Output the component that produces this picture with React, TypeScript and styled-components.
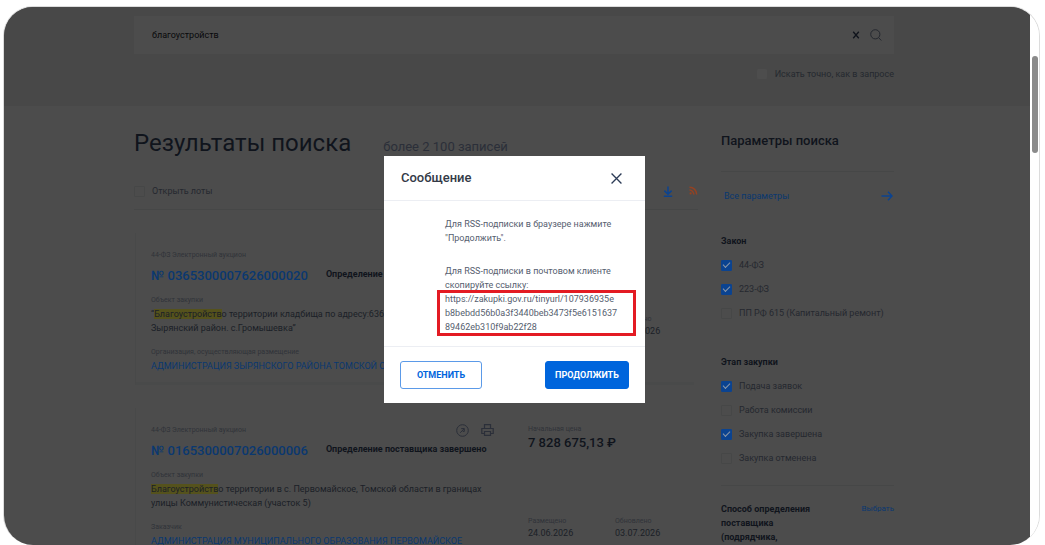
import React from "react";
import styled, { createGlobalStyle, css } from "styled-components";

const c = {
  page: "#4c4c4c",
  header: "#484848",
  line: "#464747",
  ink: "#10141c",
  text: "#1b1f27",
  soft: "#25282f",
  muted: "#303339",
  count: "#2b2f39",
  link: "#0a3870",
  blue: "#0b4390",
};

const GlobalStyle = createGlobalStyle`
  *, *::before, *::after { box-sizing: border-box; }
  body {
    margin: 0;
    background: #fff;
    font-family: Roboto, "Liberation Sans", sans-serif;
    font-size: 9px;
    line-height: 14px;
    color: ${c.text};
  }
  h1, h2, h3, p, fieldset, legend, dl, dt, dd { margin: 0; padding: 0; border: 0; }
  button, input { font: inherit; color: inherit; }
  a { color: ${c.link}; text-decoration: none; }
`;

const Frame = styled.div`
  display: flex;
  height: calc(100vh - 6px);
  margin: 6px 5px 0 3px;
  overflow: hidden;
  border: 1px solid #dcdcdc;
  border-bottom: 0;
  border-radius: 30px;
`;

const Page = styled.div`
  position: relative;
  flex: 1;
  overflow: hidden;
  background: ${c.page};
`;

const ScrollTrack = styled.div`
  width: 9px;
  padding: 49px 1px 0 2px;
  background: #fff;
`;

const ScrollThumb = styled.div`
  height: 97px;
  border-radius: 3px;
  background: #8a8a8a;
`;

const Header = styled.header`
  display: flex;
  flex-direction: column;
  align-items: flex-end;
  gap: 13px;
  height: 99px;
  padding: 9px 136px 0 130px;
  background: ${c.header};
`;

const SearchBar = styled.form`
  display: flex;
  align-items: center;
  gap: 10px;
  width: 100%;
  height: 38px;
  padding: 0 12px 0 18px;
  background: ${c.page};
`;

const SearchInput = styled.input`
  flex: 1;
  min-width: 0;
  padding: 0;
  border: 0;
  outline: 0;
  background: none;
  color: #08090b;
`;

const IconButton = styled.button<{ $color?: string }>`
  display: inline-flex;
  flex: none;
  padding: 0;
  border: 0;
  background: none;
  color: ${(p) => p.$color ?? c.soft};
  cursor: pointer;
`;

const CheckLabel = styled.label<{ $gap?: number }>`
  display: flex;
  align-items: center;
  gap: ${(p) => p.$gap ?? 8}px;
  color: ${c.soft};
`;

const CheckInput = styled.input.attrs({ type: "checkbox" })<{ $light?: boolean }>`
  appearance: none;
  position: relative;
  flex: none;
  width: 10px;
  height: 10px;
  margin: 0;
  border: 1px solid ${(p) => (p.$light ? "#4d4d4d" : "#464747")};
  border-radius: 1px;
  background: ${(p) => (p.$light ? "#4d4d4d" : "transparent")};

  ${(p) =>
    !p.$light &&
    css`
      width: 11px;
      height: 11px;
    `}

  &:checked {
    border-color: ${c.blue};
    background: ${c.blue};
  }

  &:checked::after {
    content: "";
    position: absolute;
    left: 1px;
    top: 1px;
    width: 7px;
    height: 4px;
    border: solid #8a97a8;
    border-width: 0 0 1px 1px;
    transform: rotate(-45deg);
  }
`;

const Columns = styled.div`
  display: grid;
  grid-template-columns: minmax(0, 1fr) 173px;
  gap: 23px;
  padding: 0 136px 0 130px;
`;

const Results = styled.main`
  padding-top: 21px;
`;

const TitleRow = styled.div`
  display: flex;
  align-items: flex-end;
  gap: 32px;
`;

const Title = styled.h1`
  font-size: 24px;
  font-weight: 400;
  line-height: 32px;
  color: ${c.ink};
`;

const Count = styled.span`
  font-size: 13px;
  line-height: 24px;
  color: ${c.count};
`;

const Toolbar = styled.div`
  display: flex;
  align-items: center;
  justify-content: space-between;
  height: 37px;
  margin-top: 14px;
  border-bottom: 1px solid ${c.line};
`;

const ToolIcons = styled.div`
  display: flex;
  gap: 16px;
`;

const Card = styled.article`
  display: grid;
  grid-template-columns: minmax(0, 1fr) 166px;
  gap: 34px;
  min-height: 152px;
  margin: 23px 4px 0 1px;
  padding: 14px 0 0 15px;
  border-left: 1px solid #484949;
  border-bottom: 3px solid #494a4a;
`;

const CardMain = styled.div``;

const CardTop = styled.div`
  display: flex;
  align-items: center;
  justify-content: space-between;
  height: 16px;
`;

const CardIcons = styled.span`
  display: flex;
  gap: 12px;
  color: ${c.count};
`;

const Caption = styled.div`
  font-size: 7px;
  line-height: 14px;
  color: ${c.muted};
`;

const NumberRow = styled.div`
  display: flex;
  align-items: center;
  gap: 18px;
  height: 26px;
  margin-bottom: 4px;
`;

const NumberLink = styled.a`
  font-size: 13px;
  font-weight: 500;
  white-space: nowrap;
`;

const Status = styled.span`
  padding-bottom: 4px;
  font-weight: 700;
  white-space: nowrap;
  color: ${c.ink};
`;

const Subject = styled.p`
  margin-bottom: 10px;
  white-space: nowrap;
`;

const Mark = styled.mark`
  background: #55521c;
  color: inherit;
`;

const OrgLink = styled.a`
  display: block;
  white-space: nowrap;
`;

const CardSide = styled.div<{ $drop: number }>`
  display: flex;
  flex-direction: column;
  gap: ${(p) => p.$drop}px;
`;

const PriceBlock = styled.div`
  height: 32px;
`;

const Price = styled.div`
  font-size: 13px;
  font-weight: 500;
  color: ${c.ink};
`;

const Dates = styled.dl`
  display: grid;
  grid-template-columns: 87px 1fr;
  line-height: 12px;

  dt {
    font-size: 7px;
    color: ${c.muted};
  }
`;

const Sidebar = styled.aside`
  padding-top: 26px;
`;

const SideTitle = styled.h2`
  height: 40px;
  font-size: 13px;
  font-weight: 500;
  line-height: 18px;
  color: ${c.ink};
  border-bottom: 1px solid ${c.line};
`;

const AllParams = styled.a`
  display: flex;
  align-items: center;
  justify-content: space-between;
  height: 47px;
  padding: 0 1px 0 3px;
`;

const Group = styled.fieldset`
  display: flex;
  flex-direction: column;
  gap: 10px;
  padding: 15px 0 20px;
`;

const GroupTitle = styled.legend`
  float: left;
  font-weight: 700;
  color: ${c.ink};
`;

const MethodRow = styled.section`
  display: flex;
  justify-content: space-between;
  padding-top: 16px;
  border-top: 1px solid ${c.line};

  h3 {
    width: 100px;
    font-size: 9px;
    font-weight: 700;
    color: ${c.ink};
  }

  a {
    font-size: 8px;
  }
`;

const Overlay = styled.div`
  position: absolute;
  inset: 0;
  display: flex;
  align-items: flex-start;
  justify-content: center;
  padding: 149px 5px 0 0;
`;

const Dialog = styled.section`
  width: 261px;
  background: #fff;
  color: #56606f;
`;

const DialogHeader = styled.header`
  display: flex;
  align-items: center;
  justify-content: space-between;
  height: 45px;
  padding: 0 23px 0 17px;
  border-bottom: 1px solid #eceef3;

  h2 {
    font-size: 13px;
    font-weight: 500;
    color: #333a47;
  }
`;

const DialogBody = styled.div`
  display: flex;
  flex-direction: column;
  gap: 19px;
  height: 145px;
  padding: 16px 16px 0 61px;
`;

const Feed = styled.a`
  position: relative;
  display: block;
  color: inherit;

  &::after {
    content: "";
    position: absolute;
    inset: -2px -7px -2px -8px;
    border: 3px solid #e31b23;
  }
`;

const DialogFooter = styled.footer`
  display: flex;
  align-items: center;
  justify-content: space-between;
  height: 57px;
  padding: 0 16px;
  border-top: 1px solid #eceef3;
`;

const Action = styled.button<{ $primary?: boolean }>`
  width: ${(p) => (p.$primary ? 84 : 82)}px;
  height: 28px;
  padding: 0;
  border: 1px solid ${(p) => (p.$primary ? "#0065dc" : "#5b9ae8")};
  border-radius: 3px;
  background: ${(p) => (p.$primary ? "#0065dc" : "#fff")};
  color: ${(p) => (p.$primary ? "#fff" : "#0065dc")};
  font-weight: 700;
  cursor: pointer;
`;

const CrossIcon = ({ size, width }: { size: number; width: number }) => (
  <svg width={size} height={size} viewBox="0 0 10 10" fill="none" stroke="currentColor" strokeWidth={width}>
    <path d="M0.5 0.5 9.5 9.5M9.5 0.5 0.5 9.5" />
  </svg>
);

const ClearIcon = () => (
  <svg width="8" height="8" viewBox="0 0 8 8" fill="none" stroke="currentColor" strokeWidth="1.3">
    <path d="M1.2 0.8 6.8 7.2M6.8 0.8 1.2 7.2" />
  </svg>
);

const SearchIcon = () => (
  <svg width="12" height="12" viewBox="0 0 12 12" fill="none" stroke="currentColor">
    <circle cx="5.3" cy="5.3" r="4.6" />
    <path d="M8.7 8.7 11.3 11.5" />
  </svg>
);

const DownloadIcon = () => (
  <svg width="10" height="11" viewBox="0 0 10 11" fill="none" stroke="currentColor" strokeWidth="1.5">
    <path d="M5 0.5V8M1.4 4.6 5 8.2 8.6 4.6M0.8 10.2H9.2" />
  </svg>
);

const RssIcon = () => (
  <svg width="9" height="9" viewBox="0 0 9 9" fill="none" stroke="currentColor" strokeWidth="1.5">
    <path d="M0.5 1.2A7.2 7.2 0 0 1 7.7 8.6M0.5 4.1A4.3 4.3 0 0 1 4.8 8.6" />
    <circle cx="1.6" cy="7.4" r="1.1" fill="currentColor" stroke="none" />
  </svg>
);

const ArrowIcon = () => (
  <svg width="12" height="10" viewBox="0 0 12 10" fill="none" stroke={c.blue} strokeWidth="1.5">
    <path d="M0.5 5H11M7 0.8 11 5 7 9.2" />
  </svg>
);

const KeyIcon = () => (
  <svg width="13" height="13" viewBox="0 0 13 13" fill="none" stroke="currentColor">
    <circle cx="6.5" cy="6.5" r="5.8" />
    <path d="M5.2 4.6H8.3V7.4H6.8M8 4.9 4.2 8.8" />
  </svg>
);

const PrintIcon = () => (
  <svg width="13" height="12" viewBox="0 0 13 12" fill="none" stroke="currentColor" strokeWidth="1.2">
    <path d="M3.5 4.5V0.6H9.5V4.5M3.5 9.5H0.8V4.5H12.2V9.5H9.5M3.5 7.5H9.5V11.4H3.5Z" />
  </svg>
);

type Purchase = {
  number: string;
  quote?: string;
  mark: string;
  subject: React.ReactNode;
  role: string;
  org: string;
  price?: string;
  placed?: string;
  updated: string;
  drop: number;
};

const purchases: Purchase[] = [
  {
    number: "0365300007626000020",
    quote: "“",
    mark: "Благоустройств",
    subject: (
      <>
        о территории кладбища по адресу:6368
        <br />
        Зырянский район. с.Громышевка”
      </>
    ),
    role: "Организация, осуществляющая размещение",
    org: "АДМИНИСТРАЦИЯ ЗЫРЯНСКОГО РАЙОНА ТОМСКОЙ ОБЛ",
    updated: "03.07.2026",
    drop: 34,
  },
  {
    number: "0165300007026000006",
    mark: "Благоустройств",
    subject: (
      <>
        о территории в с. Первомайское, Томской области в границах
        <br />
        улицы Коммунистическая (участок 5)
      </>
    ),
    role: "Заказчик",
    org: "АДМИНИСТРАЦИЯ МУНИЦИПАЛЬНОГО ОБРАЗОВАНИЯ ПЕРВОМАЙСКОЕ",
    price: "7 828 675,13 ₽",
    placed: "24.06.2026",
    updated: "03.07.2026",
    drop: 61,
  },
];

const filters = [
  {
    title: "Закон",
    items: [
      ["44-ФЗ", true],
      ["223-ФЗ", true],
      ["ПП РФ 615 (Капитальный ремонт)", false],
    ],
  },
  {
    title: "Этап закупки",
    items: [
      ["Подача заявок", true],
      ["Работа комиссии", false],
      ["Закупка завершена", true],
      ["Закупка отменена", false],
    ],
  },
] as { title: string; items: [string, boolean][] }[];

const PurchaseCard = ({ item }: { item: Purchase }) => (
  <Card>
    <CardMain>
      <CardTop>
        <Caption>44-ФЗ Электронный аукцион</Caption>
        <CardIcons>
          <KeyIcon />
          <PrintIcon />
        </CardIcons>
      </CardTop>
      <NumberRow>
        <NumberLink href="#">№ {item.number}</NumberLink>
        <Status>Определение поставщика завершено</Status>
      </NumberRow>
      <Caption>Объект закупки</Caption>
      <Subject>
        {item.quote}
        <Mark>{item.mark}</Mark>
        {item.subject}
      </Subject>
      <Caption>{item.role}</Caption>
      <OrgLink href="#">{item.org}</OrgLink>
    </CardMain>
    <CardSide $drop={item.drop}>
      <PriceBlock>
        {item.price && (
          <>
            <Caption>Начальная цена</Caption>
            <Price>{item.price}</Price>
          </>
        )}
      </PriceBlock>
      <Dates>
        <dt>{item.placed && "Размещено"}</dt>
        <dt>Обновлено</dt>
        <dd>{item.placed}</dd>
        <dd>{item.updated}</dd>
      </Dates>
    </CardSide>
  </Card>
);

export default function App() {
  return (
    <>
      <GlobalStyle />
      <Frame>
        <Page>
          <Header>
            <SearchBar onSubmit={(e) => e.preventDefault()}>
              <SearchInput aria-label="Поиск" defaultValue="благоустройств" />
              <IconButton type="button" aria-label="Очистить" $color={c.ink}>
                <ClearIcon />
              </IconButton>
              <IconButton aria-label="Найти">
                <SearchIcon />
              </IconButton>
            </SearchBar>
            <CheckLabel>
              <CheckInput $light />
              Искать точно, как в запросе
            </CheckLabel>
          </Header>
          <Columns>
            <Results>
              <TitleRow>
                <Title>Результаты поиска</Title>
                <Count>более 2 100 записей</Count>
              </TitleRow>
              <Toolbar>
                <CheckLabel $gap={7}>
                  <CheckInput />
                  Открыть лоты
                </CheckLabel>
                <ToolIcons>
                  <IconButton type="button" aria-label="Скачать" $color={c.blue}>
                    <DownloadIcon />
                  </IconButton>
                  <IconButton type="button" aria-label="RSS" $color="#944222">
                    <RssIcon />
                  </IconButton>
                </ToolIcons>
              </Toolbar>
              {purchases.map((p) => (
                <PurchaseCard key={p.number} item={p} />
              ))}
            </Results>
            <Sidebar>
              <SideTitle>Параметры поиска</SideTitle>
              <AllParams href="#">
                Все параметры
                <ArrowIcon />
              </AllParams>
              {filters.map((g) => (
                <Group key={g.title}>
                  <GroupTitle>{g.title}</GroupTitle>
                  {g.items.map(([name, on]) => (
                    <CheckLabel key={name} $gap={7}>
                      <CheckInput defaultChecked={on} />
                      {name}
                    </CheckLabel>
                  ))}
                </Group>
              ))}
              <MethodRow>
                <h3>Способ определения поставщика (подрядчика,</h3>
                <a href="#">Выбрать</a>
              </MethodRow>
            </Sidebar>
          </Columns>
          <Overlay>
            <Dialog role="dialog" aria-modal="true" aria-labelledby="dialog-title">
              <DialogHeader>
                <h2 id="dialog-title">Сообщение</h2>
                <IconButton type="button" aria-label="Закрыть" $color="#2b3a55">
                  <CrossIcon size={11} width={1.2} />
                </IconButton>
              </DialogHeader>
              <DialogBody>
                <p>Для RSS-подписки в браузере нажмите "Продолжить".</p>
                <div>
                  <p>Для RSS-подписки в почтовом клиенте скопируйте ссылку:</p>
                  <Feed href="#">
                    https://zakupki.gov.ru/tinyurl/107936935e
                    <br />
                    b8bebdd56b0a3f3440beb3473f5e6151637
                    <br />
                    89462eb310f9ab22f28
                  </Feed>
                </div>
              </DialogBody>
              <DialogFooter>
                <Action type="button">ОТМЕНИТЬ</Action>
                <Action type="button" $primary>
                  ПРОДОЛЖИТЬ
                </Action>
              </DialogFooter>
            </Dialog>
          </Overlay>
        </Page>
        <ScrollTrack>
          <ScrollThumb />
        </ScrollTrack>
      </Frame>
    </>
  );
}
